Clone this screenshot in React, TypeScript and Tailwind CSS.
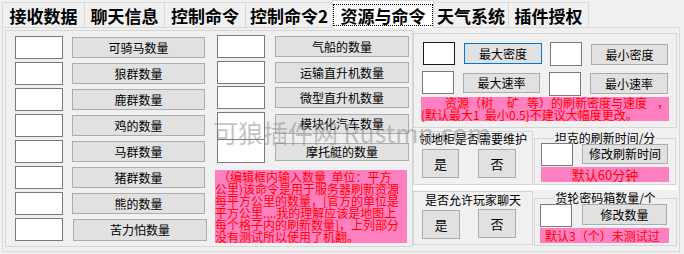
import React from "react";

const tb = "bg-white border border-[#7a7a7a]";
const tbFocus = "bg-white border border-[#1a1a1a]";
const btn =
  "flex items-center justify-center bg-[#e1e1e1] border border-[#adadad] text-[12px] leading-none text-black whitespace-nowrap";
const btnFocus =
  "flex items-center justify-center bg-[#e1e1e1] border border-[#0078d7] text-[12px] leading-none text-black whitespace-nowrap";
const pink = "bg-[#ff80c0] text-[#ff0000]";

function Tab({ className, children }: { className: string; children: React.ReactNode }) {
  return (
    <div
      className={`h-[25px] -ml-px first:ml-0 border border-b-0 border-[#d9d9d9] bg-[#f0f0f0] flex items-center justify-center text-[17px] font-bold leading-none ${className}`}
    >
      {children}
    </div>
  );
}

export default function App() {
  const leftRows = ["可骑马数量", "狼群数量", "鹿群数量", "鸡的数量", "马群数量", "猪群数量", "熊的数量"];
  return (
    <div className="relative w-[684px] h-[254px] overflow-hidden bg-[#f0f0f0] font-['Noto_Sans_CJK_SC',sans-serif] text-black">
      {/* tab strip */}
      <div className="flex items-end h-[27px] pl-[2px]">
        <Tab className="w-[83px]">接收数据</Tab>
        <Tab className="w-[81px]">聊天信息</Tab>
        <Tab className="w-[82px]">控制命令</Tab>
        <Tab className="w-[88px]">控制命令2</Tab>
        <div className="relative z-10 -ml-px -mb-px h-[28px] w-[102px] border border-b-0 border-[#d9d9d9] bg-white flex items-start justify-center pt-[3px]">
          <div className="w-[100px] h-[22px] border border-dotted border-black flex items-center justify-center text-[17px] font-bold leading-none">
            资源与命令
          </div>
        </div>
        <Tab className="w-[76px]">天气系统</Tab>
        <Tab className="w-[81px]">插件授权</Tab>
      </div>

      {/* tab page */}
      <div className="ml-[2px] w-[678px] h-[225px] border border-[#d9d9d9] flex items-start">
        {/* left big group */}
        <div className="ml-[2px] mt-[2px] w-[408px] h-[217px] border border-[#d5d5d5] flex items-start">
          {/* column A */}
          <div className="flex flex-col gap-[3px] pt-[5px] pl-[9px]">
            {leftRows.map((t) => (
              <div key={t} className="flex items-center h-[23px]">
                <div className={`${tb} w-[48px] h-[23px]`} />
                <div className={`${btn} ml-[9px] w-[133px] h-[21px]`}>{t}</div>
              </div>
            ))}
            <div className="flex items-center h-[23px]">
              <div className={`${tb} w-[48px] h-[23px]`} />
              <div className={`${btn} ml-[10px] mt-[1px] w-[134px] h-[22px]`}>苦力怕数量</div>
            </div>
          </div>

          {/* column B */}
          <div className="flex flex-col pt-[4px] ml-[10px]">
            <div className="flex items-start">
              <div className={`${tb} w-[48px] h-[23px]`} />
              <div className={`${btn} ml-[10px] mt-[1px] w-[134px] h-[21px]`}>气船的数量</div>
            </div>
            <div className="flex items-start mt-[3px]">
              <div className={`${tb} w-[48px] h-[23px]`} />
              <div className={`${btn} ml-[10px] mt-[1px] w-[134px] h-[21px]`}>运输直升机数量</div>
            </div>
            <div className="flex items-start mt-[2px]">
              <div className={`${tb} w-[48px] h-[23px]`} />
              <div className={`${btn} ml-[10px] mt-[1px] w-[134px] h-[21px]`}>微型直升机数量</div>
            </div>
            <div className="flex items-start mt-[3px]">
              <div className={`${tb} w-[48px] h-[28px]`} />
              <div className={`${btn} ml-[10px] mt-[2px] w-[134px] h-[20px]`}>模块化汽车数量</div>
            </div>
            <div className="flex items-start -mt-[1px]">
              <div className={`${tb} w-[48px] h-[24px]`} />
              <div className={`${btn} ml-[10px] mt-[4px] w-[134px] h-[18px]`}>摩托艇的数量</div>
            </div>
            <div className={`${pink} mt-[7px] -ml-[2px] w-[192px] h-[73px] pt-[1px] text-[12px] leading-[12px] whitespace-pre`}>
              <div className="pl-[3px]">（编辑框内输入数量  单位：平方</div>
              <div>公里)该命令是用于服务器刷新资源</div>
              <div>每平方公里的数量，[官方的单位是</div>
              <div>平方公里....我的理解应该是地图上</div>
              <div>每个格子内的刷新数量]，上列部分</div>
              <div>没有测试所以使用了机翻。</div>
            </div>
          </div>
        </div>

        {/* right column */}
        <div className="mt-[5px] w-[264px] flex flex-col">
          {/* density / speed group */}
          <div className="h-[95px] border border-[#d5d5d5] flex flex-col">
            <div className="flex items-start mt-[8px]">
              <div className={`${tbFocus} ml-[9px] w-[32px] h-[23px]`} />
              <div className={`${btnFocus} ml-[9px] mt-[1px] w-[78px] h-[21px]`}>最大密度</div>
              <div className={`${tb} ml-[8px] w-[32px] h-[24px]`} />
              <div className={`${btn} ml-[9px] mt-[2px] w-[77px] h-[21px]`}>最小密度</div>
            </div>
            <div className="flex items-start mt-[5px]">
              <div className={`${tb} ml-[8px] w-[32px] h-[23px]`} />
              <div className={`${btn} ml-[9px] mt-[2px] w-[77px] h-[20px]`}>最大速率</div>
              <div className={`${tb} ml-[9px] mt-[1px] w-[32px] h-[24px]`} />
              <div className={`${btn} ml-[9px] mt-[2px] w-[78px] h-[21px]`}>最小速率</div>
            </div>
            <div className={`${pink} mt-[1px] ml-[7px] w-[248px] h-[24px] text-[12px] leading-[12px] whitespace-pre`}>
              <div className="pl-[24px] flex">
                <span>资源（树</span>
                <span className="ml-[14px]">矿</span>
                <span className="ml-[8px]">等）的刷新密度与速度</span>
                <span className="ml-[10px]">，</span>
              </div>
              <div>{"{默认最大1  最小0.5}不建议大幅度更改。"}</div>
            </div>
          </div>

          {/* row A */}
          <div className="flex items-start mt-[3px] h-[54px]">
            <div className="w-[120px] h-[54px] border border-[#d5d5d5] flex flex-col items-center">
              <div className="text-[12px] leading-[14px] whitespace-nowrap">领地柜是否需要维护</div>
              <div className="flex self-stretch mt-[3px]">
                <div className={`${btn} ml-[8px] w-[37px] h-[29px] text-[13px]`}>是</div>
                <div className={`${btn} ml-[19px] w-[38px] h-[29px] text-[13px]`}>否</div>
              </div>
            </div>
            <fieldset className="ml-[1px] w-[142px] h-[54px] border border-[#d5d5d5] min-w-0">
              <legend className="mx-auto px-[1px] text-[12px] leading-[14px] whitespace-nowrap">坦克的刷新时间/分</legend>
              <div className="flex items-start -mt-[2px]">
                <div className={`${tb} ml-[6px] w-[32px] h-[23px]`} />
                <div className={`${btn} ml-[9px] mt-[1px] w-[86px] h-[20px]`}>修改刷新时间</div>
              </div>
              <div className={`${pink} mt-[1px] ml-[6px] w-[128px] h-[15px] text-[13px] leading-[15px] text-center`}>
                默认60分钟
              </div>
            </fieldset>
          </div>

          <div className="h-[5px] bg-white" />

          {/* row B */}
          <div className="flex items-start mt-[1px] h-[55px]">
            <div className="w-[120px] h-[54px] border border-[#d5d5d5] flex flex-col items-center">
              <div className="mt-[1px] text-[12px] leading-[14px] whitespace-nowrap">是否允许玩家聊天</div>
              <div className="flex items-start self-stretch mt-[2px]">
                <div className={`${btn} ml-[8px] mt-[1px] w-[38px] h-[29px] text-[13px]`}>是</div>
                <div className={`${btn} ml-[18px] w-[38px] h-[29px] text-[13px]`}>否</div>
              </div>
            </div>
            <fieldset className="ml-[1px] w-[143px] h-[55px] border border-[#d5d5d5] min-w-0">
              <legend className="mx-auto px-[1px] text-[12px] leading-[14px] whitespace-nowrap">货轮密码箱数量/个</legend>
              <div className="flex items-start -mt-[1px]">
                <div className={`${tb} ml-[5px] w-[32px] h-[23px]`} />
                <div className={`${btn} ml-[10px] w-[85px] h-[21px]`}>修改数量</div>
              </div>
              <div className={`${pink} mt-[1px] ml-[5px] w-[129px] h-[15px] pl-[5px] text-[12px] leading-[15px] whitespace-nowrap`}>
                默认3（个）未测试过
              </div>
            </fieldset>
          </div>
        </div>
      </div>

      {/* watermark overlay */}
      <div className="pointer-events-none absolute left-[213px] top-[117px] text-[25px] leading-[30px] text-[#8a8a8a]/50 whitespace-pre">
        可狼插件网 Rustmn.com
      </div>
    </div>
  );
}
